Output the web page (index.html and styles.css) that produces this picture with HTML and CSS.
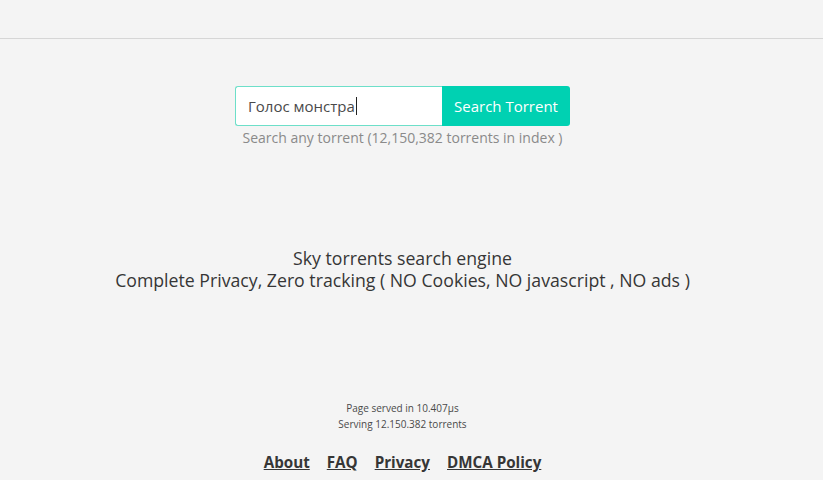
FILE: index.html
```html
<!DOCTYPE html>
<html>
<head>
<meta charset="utf-8">
<link rel="stylesheet" href="styles.css">
</head>
<body>
<header class="top"></header>
<main class="main">
  <form class="search">
    <div class="field">
      <span class="input">Голос монстра<span class="caret"></span></span>
      <button class="btn" type="button">Search Torrent</button>
    </div>
    <p class="hint">Search any torrent (12,150,382 torrents in index )</p>
  </form>
  <section class="about">
    <p>Sky torrents search engine</p>
    <p>Complete Privacy, Zero tracking ( NO Cookies, NO javascript , NO ads )</p>
  </section>
  <section class="stats">
    <p>Page served in 10.407µs</p>
    <p>Serving 12.150.382 torrents</p>
  </section>
  <nav class="links">
    <a href="#">About</a>
    <a href="#">FAQ</a>
    <a href="#">Privacy</a>
    <a href="#">DMCA Policy</a>
  </nav>
</main>
</body>
</html>
```
FILE: styles.css
```css
html, body {
  margin: 0;
  padding: 0;
  background: #f4f4f4;
  overflow: hidden;
}
body {
  font-family: "Open Sans", "Noto Sans", sans-serif;
  color: #363636;
}
.top {
  height: 38px;
  border-bottom: 1px solid #d6d6d6;
}
.main {
  width: 805px;
  display: flex;
  flex-direction: column;
  align-items: center;
}
.search {
  margin-top: 47px;
  display: flex;
  flex-direction: column;
  align-items: center;
}
.field {
  display: flex;
  height: 40px;
}
.input {
  box-sizing: border-box;
  width: 207px;
  height: 40px;
  background: #fff;
  border: 1px solid #6ddfc9;
  border-right: none;
  border-radius: 3px 0 0 3px;
  padding-left: 12px;
  display: flex;
  align-items: center;
  font-size: 15px;
  color: #4a4a4a;
}
.caret {
  display: inline-block;
  width: 1px;
  height: 18px;
  background: #222;
  margin-left: 1px;
}
.btn {
  width: 128px;
  height: 40px;
  border: none;
  background: #00d1b2;
  color: #fff;
  font-family: inherit;
  font-size: 15px;
  border-radius: 0 3px 3px 0;
  padding: 0;
}
.hint {
  margin: 2px 0 0;
  font-size: 14px;
  color: #8a8a8a;
  line-height: 20px;
}
.about {
  margin-top: 99px;
  text-align: center;
  font-size: 17.7px;
  line-height: 22px;
  color: #363636;
}
.about p { margin: 0; }
.stats {
  margin-top: 109px;
  text-align: center;
  font-size: 10px;
  line-height: 16px;
  color: #4a4a4a;
}
.stats p { margin: 0; }
.links {
  margin-top: 20px;
  display: flex;
  gap: 17px;
}
.links a {
  font-size: 15.2px;
  font-weight: 700;
  color: #363636;
  text-decoration: underline;
}
```
